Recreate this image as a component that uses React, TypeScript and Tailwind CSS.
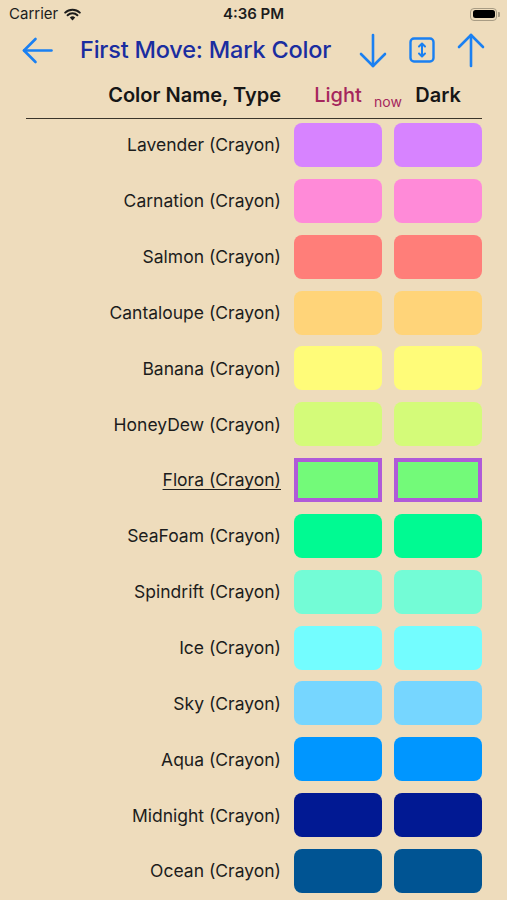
import React from 'react';

type Swatch = { name: string; color: string; selected?: boolean };

const colors: Swatch[] = [
  { name: 'Lavender', color: '#d783ff' },
  { name: 'Carnation', color: '#ff8ad8' },
  { name: 'Salmon', color: '#ff7e79' },
  { name: 'Cantaloupe', color: '#ffd479' },
  { name: 'Banana', color: '#fffc79' },
  { name: 'HoneyDew', color: '#d4fb79' },
  { name: 'Flora', color: '#73fa79', selected: true },
  { name: 'SeaFoam', color: '#00fa92' },
  { name: 'Spindrift', color: '#73fcd6' },
  { name: 'Ice', color: '#73fdff' },
  { name: 'Sky', color: '#76d6ff' },
  { name: 'Aqua', color: '#0096ff' },
  { name: 'Midnight', color: '#011993' },
  { name: 'Ocean', color: '#005493' },
];

function StatusBar() {
  return (
    <div className="relative flex h-[28px] items-center px-[9px] text-[#1c1c1c]">
      <span className="text-[15px]">Carrier</span>
      {/* wifi */}
      <svg className="ml-[6px]" width="17" height="13" viewBox="0 0 17 13">
        <path d="M8.5 12.5 L5.8 9.6 A3.8 3.8 0 0 1 11.2 9.6 Z" fill="#1c1c1c" />
        <path d="M3.6 7.3 A7 7 0 0 1 13.4 7.3" stroke="#1c1c1c" strokeWidth="2" fill="none" strokeLinecap="round" />
        <path d="M1.2 4.6 A10.5 10.5 0 0 1 15.8 4.6" stroke="#1c1c1c" strokeWidth="2" fill="none" strokeLinecap="round" />
      </svg>
      <span className="absolute left-1/2 -translate-x-1/2 text-[15px] font-semibold">4:36 PM</span>
      {/* battery */}
      <div className="ml-auto mr-[-2px] flex items-center">
        <div className="h-[13px] w-[27px] rounded-[4px] border border-[#a89c84] p-[1.5px]">
          <div className="h-full w-full rounded-[2.5px] bg-black" />
        </div>
        <div className="ml-[1px] h-[5px] w-[2px] rounded-r-[1px] bg-[#a89c84]" />
      </div>
    </div>
  );
}

function NavBar() {
  const blue = '#1a80f2';
  return (
    <div className="flex h-[44px] items-center pl-[22px] pr-[22px]">
      <svg width="31" height="27" viewBox="0 0 31 27" fill="none" stroke={blue} strokeWidth="2.6" strokeLinecap="round" strokeLinejoin="round">
        <path d="M2 13.5 H29.5" />
        <path d="M13.5 2 L2 13.5 L13.5 25" />
      </svg>
      <h1 className="ml-[27px] text-[23.5px] font-medium tracking-[-0.2px] text-[#1a2da0]">First Move: Mark Color</h1>
      <svg className="ml-auto" width="28" height="35" viewBox="0 0 28 35" fill="none" stroke={blue} strokeWidth="2.6" strokeLinecap="round" strokeLinejoin="round">
        <path d="M14 2 V33" />
        <path d="M2 21 L14 33 L26 21" />
      </svg>
      <svg className="ml-[22px]" width="26" height="26" viewBox="0 0 26 26" fill="none" stroke={blue} strokeWidth="2.4" strokeLinecap="round" strokeLinejoin="round">
        <rect x="1.5" y="1.5" width="23" height="23" rx="3.5" />
        <path d="M13 7 V19" strokeWidth="2" />
        <path d="M10 9.5 L13 6.5 L16 9.5" strokeWidth="2" />
        <path d="M10 16.5 L13 19.5 L16 16.5" strokeWidth="2" />
      </svg>
      <svg className="ml-[22px]" width="28" height="35" viewBox="0 0 28 35" fill="none" stroke={blue} strokeWidth="2.6" strokeLinecap="round" strokeLinejoin="round">
        <path d="M14 33 V2" />
        <path d="M2 14 L14 2 L26 14" />
      </svg>
    </div>
  );
}

function ColorRow({ item }: { item: Swatch }) {
  const box = item.selected
    ? 'h-[44px] w-[88px] border-[4px] border-[#b05ad8]'
    : 'h-[44px] w-[88px] rounded-[8px]';
  return (
    <div className="flex items-center">
      <span
        className={
          'w-[255px] pt-[1px] text-right text-[17.5px] text-[#1c1c1c] ' +
          (item.selected ? 'underline underline-offset-[3px] decoration-1' : '')
        }
      >
        {item.name} (Crayon)
      </span>
      <div className="ml-[13px] flex gap-[12px]">
        <div className={box} style={{ backgroundColor: item.color }} />
        <div className={box} style={{ backgroundColor: item.color }} />
      </div>
    </div>
  );
}

export default function App() {
  return (
    <div
      className="h-[900px] w-[507px] overflow-hidden bg-[#eedcbc]"
      style={{ fontFamily: 'Inter, "Noto Sans", sans-serif' }}
    >
      <StatusBar />
      <NavBar />

      <div className="px-[25px] pl-[26px]">
        <div className="flex h-[46px] items-center">
          <span className="w-[255px] text-right text-[20px] font-semibold text-[#161616]">
            Color Name, Type
          </span>
          <div className="relative ml-[13px] w-[88px] text-center text-[20px] font-medium text-[#a5265c]">
            Light
            <span className="absolute left-[80px] top-[11px] text-[14px] font-normal">now</span>
          </div>
          <div className="ml-[12px] w-[88px] text-center text-[20px] font-semibold text-[#161616]">
            Dark
          </div>
        </div>
        <div className="h-[1px] bg-[#3a342a]" />

        <div className="flex flex-col gap-[11.85px] pt-[4px]">
          {colors.map((c) => (
            <ColorRow key={c.name} item={c} />
          ))}
        </div>
      </div>
    </div>
  );
}
